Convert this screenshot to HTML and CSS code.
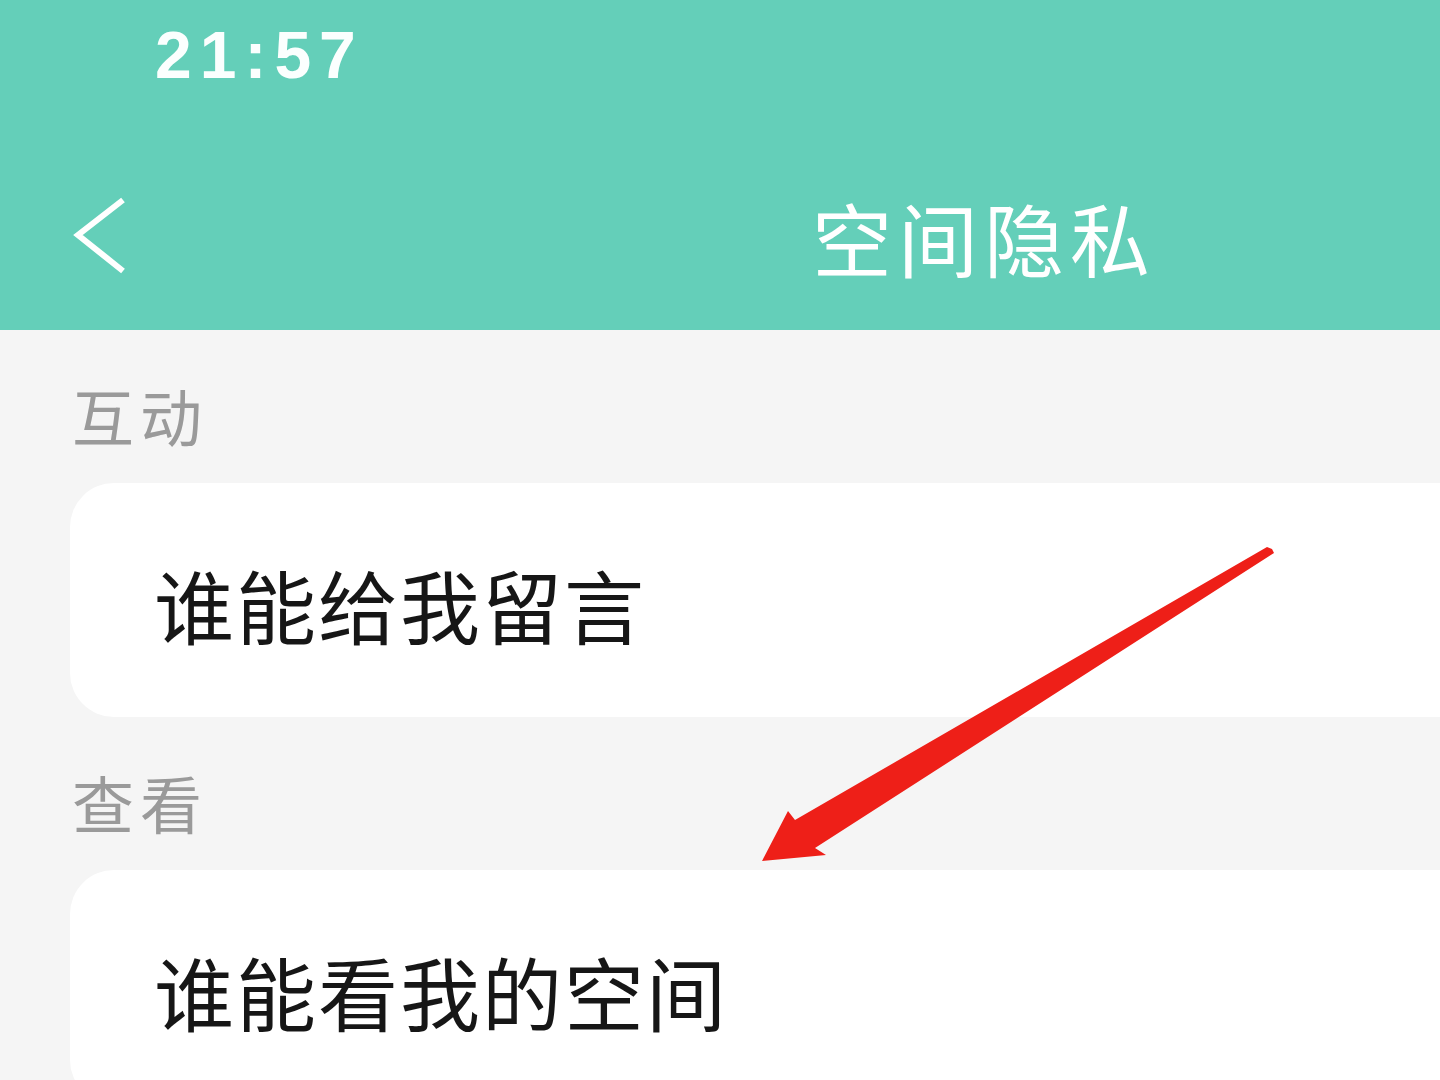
FILE: index.html
```html
<!DOCTYPE html>
<html lang="zh-CN">
<head>
  <meta charset="UTF-8">
  <meta name="viewport" content="width=device-width, initial-scale=1.0">
  <title>空间隐私</title>
  <link rel="stylesheet" href="styles.css">
</head>
<body>

  <div id="screen">
    <!-- Teal top: status bar + navigation -->
    <div class="top">
      <div class="status-bar">21:57</div>
      <div class="nav-bar">
        <svg class="back" width="56" height="80" viewBox="0 0 56 80">
          <polyline points="51,4 6,39 51,75" fill="none" stroke="#ffffff" stroke-width="6" stroke-linejoin="miter"/>
        </svg>
        <div class="nav-title">空间隐私</div>
      </div>
    </div>

    <!-- Settings list -->
    <div class="content">
      <div class="section-label">互动</div>
      <div class="card">谁能给我留言</div>

      <div class="section-label second">查看</div>
      <div class="card">谁能看我的空间</div>
    </div>

    <!-- Red annotation arrow drawn over the screenshot -->
    <svg class="pointer" width="1440" height="1080" viewBox="0 0 1440 1080">
      <polygon fill="#ee1f18" points="1267,547 1272,549 1274,553 815,848 826,855 762,861 788,811 795,820"/>
    </svg>
  </div>

</body>
</html>
```

FILE: styles.css
```css
html, body {
  margin: 0;
  padding: 0;
  width: 1440px;
  height: 1080px;
  overflow: hidden;
  background-color: #f5f5f5;
  font-family: "Noto Sans CJK SC", "Noto Sans", sans-serif;
}

#screen {
  position: relative;
  width: 1440px;
  height: 1080px;
  overflow: hidden;
}

/* Teal header area */
.top {
  background-color: #64cfb9;
  height: 330px;
}

.status-bar {
  box-sizing: border-box;
  height: 110px;
  padding: 22px 0 0 155px;
  font-family: "Liberation Sans", Arial, sans-serif;
  font-weight: bold;
  font-size: 66px;
  line-height: 66px;
  letter-spacing: 8px;
  color: #fbfffe;
}

.nav-bar {
  box-sizing: border-box;
  height: 220px;
  padding: 32px 0 0 72px;
  display: flex;
  align-items: center;
}

.back {
  display: block;
  flex-shrink: 0;
}

.nav-title {
  margin-left: 684px;
  font-size: 80px;
  line-height: 80px;
  color: #ffffff;
  letter-spacing: 6px;
}

/* Grey list area */
.content {
  padding-left: 70px;
}

.section-label {
  padding: 54px 0 0 2px;
  font-size: 62px;
  line-height: 62px;
  letter-spacing: 6px;
  color: #9a9a9a;
}

.section-label.second {
  padding-top: 54px;
}

.card {
  box-sizing: border-box;
  height: 234px;
  margin: 37px -80px 0 0;
  padding: 6px 0 0 84px;
  display: flex;
  align-items: center;
  background-color: #ffffff;
  border-radius: 44px;
  font-size: 80px;
  line-height: 80px;
  letter-spacing: 2px;
  color: #161616;
}

/* Annotation layer sits on top of everything */
.pointer {
  position: absolute;
  top: 0;
  left: 0;
  pointer-events: none;
}
```
